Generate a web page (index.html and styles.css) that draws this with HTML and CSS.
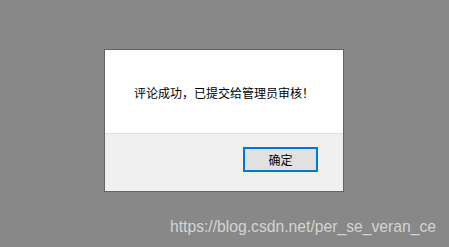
FILE: index.html
```html
<!DOCTYPE html>
<html lang="zh-CN">
<head>
<meta charset="utf-8">
<title>提示</title>
<link rel="stylesheet" href="styles.css">
</head>
<body>
<div class="dialog">
  <div class="message">评论成功，已提交给管理员审核！</div>
  <div class="footer">
    <button class="ok">确定</button>
  </div>
</div>
<div class="watermark">https://blog.csdn.net/per_se_veran_ce</div>
</body>
</html>
```
FILE: styles.css
```css
html, body {
  margin: 0;
  height: 100%;
}
body {
  background: #888888;
  padding: 49px 0 0 104px;
  box-sizing: border-box;
  font-family: "Noto Sans CJK SC", "Liberation Sans", sans-serif;
  position: relative;
  overflow: hidden;
}
.dialog {
  width: 240px;
  border: 1px solid #646464;
  box-sizing: border-box;
  background: #f0f0f0;
}
.message {
  height: 84px;
  background: #ffffff;
  display: flex;
  align-items: center;
  padding: 2px 0 0 29px;
  box-sizing: border-box;
  font-size: 12px;
  color: #000000;
  border-bottom: 1px solid #dfdfdf;
}
.footer {
  display: flex;
  justify-content: flex-end;
  padding: 13px 25px 19px 0;
}
.ok {
  width: 75px;
  height: 25px;
  border: 2px solid #0078d7;
  background: #e1e1e1;
  font-family: "Noto Sans CJK SC", sans-serif;
  font-size: 12px;
  color: #000;
  padding: 0;
  margin: 0;
}
.watermark {
  position: absolute;
  left: 170px;
  top: 218px;
  font-family: "Liberation Sans", Arial, sans-serif;
  font-size: 15.7px;
  color: #d4d4d4;
  white-space: nowrap;
}
```
